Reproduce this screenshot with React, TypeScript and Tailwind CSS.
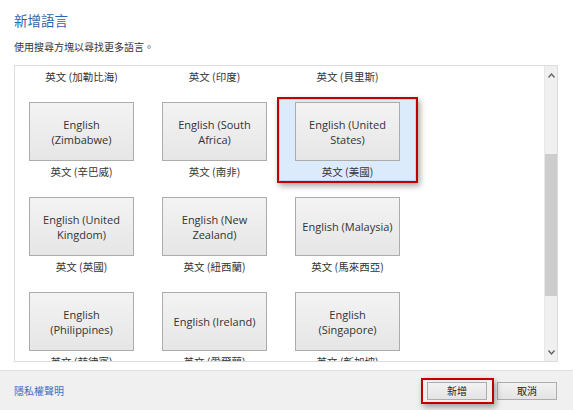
import React from 'react';

type Lang = { name: string; label: string; selected?: boolean };

// first row is scrolled up out of view; only its labels show
const langs: Lang[] = [
  { name: '', label: '英文 (加勒比海)' },
  { name: '', label: '英文 (印度)' },
  { name: '', label: '英文 (貝里斯)' },
  { name: 'English\n(Zimbabwe)', label: '英文 (辛巴威)' },
  { name: 'English (South\nAfrica)', label: '英文 (南非)' },
  { name: 'English (United\nStates)', label: '英文 (美國)', selected: true },
  { name: 'English (United\nKingdom)', label: '英文 (英國)' },
  { name: 'English (New\nZealand)', label: '英文 (紐西蘭)' },
  { name: 'English (Malaysia)', label: '英文 (馬來西亞)' },
  { name: 'English\n(Philippines)', label: '英文 (菲律賓)' },
  { name: 'English (Ireland)', label: '英文 (愛爾蘭)' },
  { name: 'English\n(Singapore)', label: '英文 (新加坡)' },
];

const cjk = { fontFamily: '"Noto Sans CJK TC", "Noto Sans", sans-serif' };
const latin = { fontFamily: '"Open Sans", "Noto Sans CJK TC", sans-serif' };

function Tile({ lang }: { lang: Lang }) {
  return (
    <div className="relative flex h-[86px] flex-col items-center pt-[5px]">
      {lang.selected && (
        <div className="absolute -left-[4px] -right-[4px] top-0 bottom-0 border-2 border-[#c00000] shadow-[2px_3px_6px_rgba(0,0,0,0.35)]">
          <div className="h-full w-full border border-[#b9d6f5] bg-[#dcebfc]" />
        </div>
      )}
      <div
        className="relative flex h-[59px] w-[105px] items-center justify-center whitespace-pre-line border border-[#acacac] bg-gradient-to-b from-[#f3f3f3] to-[#e6e6e6] text-center text-[11px] leading-[15px] text-[#333]"
        style={latin}
      >
        {lang.name}
      </div>
      <div className="relative flex h-[22px] items-center text-[10.5px] text-[#333]" style={cjk}>
        {lang.label}
      </div>
    </div>
  );
}

function Chevron({ up }: { up?: boolean }) {
  return (
    <svg width="7" height="5" viewBox="0 0 7 5" className="text-[#606060]">
      <path d={up ? 'M0.5 4.5 L3.5 1 L6.5 4.5' : 'M0.5 0.5 L3.5 4 L6.5 0.5'} fill="none" stroke="currentColor" strokeWidth="1.3" />
    </svg>
  );
}

export default function App() {
  return (
    <div className="flex h-[410px] w-[573px] flex-col overflow-hidden bg-white" style={cjk}>
      <div className="px-[14px] pt-[11px]">
        <div className="text-[13.5px] leading-[18px] text-[#2f65ad]">新增語言</div>
        <div className="mt-[11px] text-[10px] leading-[14px] text-[#333]">使用搜尋方塊以尋找更多語言。</div>
      </div>

      <div className="mt-[11px] ml-[14px] mr-[15px] flex h-[297px] border border-[#dcdcdc]">
        <div className="relative flex-1 overflow-hidden">
          <div className="-mt-[64px] grid grid-cols-[repeat(3,133px)] gap-y-[9px]">
            {langs.map(l => (
              <Tile key={l.label} lang={l} />
            ))}
          </div>
        </div>
        <div className="flex w-[13px] flex-col items-center border-l border-[#e8e8e8] bg-[#f0f0f0]">
          <div className="flex h-[16px] items-center justify-center pt-[2px]">
            <Chevron up />
          </div>
          <div className="mt-[72px] h-[142px] w-full bg-[#cdcdcd]" />
          <div className="flex-1" />
          <div className="flex h-[16px] items-center justify-center pb-[2px]">
            <Chevron />
          </div>
        </div>
      </div>

      <div className="mt-[8px] flex flex-1 items-center border-t border-[#dfdfdf] bg-[#f0f0f0] pl-[14px] pr-[16px]">
        <span className="text-[10px] text-[#3b6fc4]">隱私權聲明</span>
        <div className="ml-auto flex gap-[10px]">
          <div className="relative">
            <div className="absolute -left-[6px] -right-[7px] -top-[4px] -bottom-[4px] border-2 border-[#c00000] shadow-[2px_3px_6px_rgba(0,0,0,0.35)]" />
            <button className="relative flex h-[18px] w-[60px] items-center justify-center border border-[#adadad] bg-gradient-to-b from-[#f2f2f2] to-[#e4e4e4] text-[10px] text-[#222]">
              新增
            </button>
          </div>
          <button className="flex h-[18px] w-[60px] items-center justify-center border border-[#adadad] bg-gradient-to-b from-[#f2f2f2] to-[#e4e4e4] text-[10px] text-[#222]">
            取消
          </button>
        </div>
      </div>
    </div>
  );
}
